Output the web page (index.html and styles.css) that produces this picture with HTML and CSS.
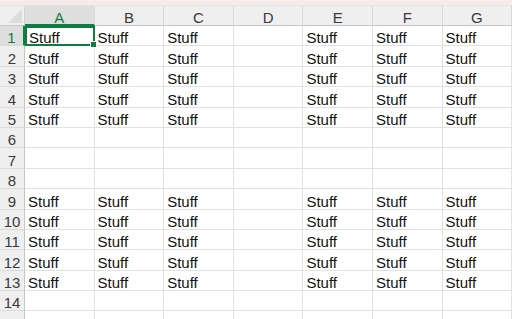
FILE: index.html
```html
<!DOCTYPE html>
<html lang="en">
<head>
    <meta charset="UTF-8">
    <title>Sheet1</title>
    <link rel="stylesheet" href="styles.css">
</head>
<body>
    <div class="ribbon-edge"></div>
    <div class="sheet">
        <div class="corner"><div class="corner-tri"></div></div>
        <div class="col-head active">A</div>
        <div class="col-head">B</div>
        <div class="col-head">C</div>
        <div class="col-head">D</div>
        <div class="col-head">E</div>
        <div class="col-head">F</div>
        <div class="col-head">G</div>

        <div class="row-head active">1</div>
        <div class="cell selected">Stuff<span class="handle"></span></div><div class="cell">Stuff</div><div class="cell">Stuff</div><div class="cell"></div><div class="cell">Stuff</div><div class="cell">Stuff</div><div class="cell">Stuff</div>
        <div class="row-head">2</div>
        <div class="cell">Stuff</div><div class="cell">Stuff</div><div class="cell">Stuff</div><div class="cell"></div><div class="cell">Stuff</div><div class="cell">Stuff</div><div class="cell">Stuff</div>
        <div class="row-head">3</div>
        <div class="cell">Stuff</div><div class="cell">Stuff</div><div class="cell">Stuff</div><div class="cell"></div><div class="cell">Stuff</div><div class="cell">Stuff</div><div class="cell">Stuff</div>
        <div class="row-head">4</div>
        <div class="cell">Stuff</div><div class="cell">Stuff</div><div class="cell">Stuff</div><div class="cell"></div><div class="cell">Stuff</div><div class="cell">Stuff</div><div class="cell">Stuff</div>
        <div class="row-head">5</div>
        <div class="cell">Stuff</div><div class="cell">Stuff</div><div class="cell">Stuff</div><div class="cell"></div><div class="cell">Stuff</div><div class="cell">Stuff</div><div class="cell">Stuff</div>
        <div class="row-head">6</div>
        <div class="cell"></div><div class="cell"></div><div class="cell"></div><div class="cell"></div><div class="cell"></div><div class="cell"></div><div class="cell"></div>
        <div class="row-head">7</div>
        <div class="cell"></div><div class="cell"></div><div class="cell"></div><div class="cell"></div><div class="cell"></div><div class="cell"></div><div class="cell"></div>
        <div class="row-head">8</div>
        <div class="cell"></div><div class="cell"></div><div class="cell"></div><div class="cell"></div><div class="cell"></div><div class="cell"></div><div class="cell"></div>
        <div class="row-head">9</div>
        <div class="cell">Stuff</div><div class="cell">Stuff</div><div class="cell">Stuff</div><div class="cell"></div><div class="cell">Stuff</div><div class="cell">Stuff</div><div class="cell">Stuff</div>
        <div class="row-head">10</div>
        <div class="cell">Stuff</div><div class="cell">Stuff</div><div class="cell">Stuff</div><div class="cell"></div><div class="cell">Stuff</div><div class="cell">Stuff</div><div class="cell">Stuff</div>
        <div class="row-head">11</div>
        <div class="cell">Stuff</div><div class="cell">Stuff</div><div class="cell">Stuff</div><div class="cell"></div><div class="cell">Stuff</div><div class="cell">Stuff</div><div class="cell">Stuff</div>
        <div class="row-head">12</div>
        <div class="cell">Stuff</div><div class="cell">Stuff</div><div class="cell">Stuff</div><div class="cell"></div><div class="cell">Stuff</div><div class="cell">Stuff</div><div class="cell">Stuff</div>
        <div class="row-head">13</div>
        <div class="cell">Stuff</div><div class="cell">Stuff</div><div class="cell">Stuff</div><div class="cell"></div><div class="cell">Stuff</div><div class="cell">Stuff</div><div class="cell">Stuff</div>
        <div class="row-head">14</div>
        <div class="cell"></div><div class="cell"></div><div class="cell"></div><div class="cell"></div><div class="cell"></div><div class="cell"></div><div class="cell"></div>
        <div class="row-head"></div>
        <div class="cell"></div><div class="cell"></div><div class="cell"></div><div class="cell"></div><div class="cell"></div><div class="cell"></div><div class="cell"></div>
    </div>
</body>
</html>
```

FILE: styles.css
```css
body {
    margin: 0;
    background-color: #ffffff;
    font-family: "Liberation Sans", Arial, sans-serif;
    overflow: hidden;
    height: 319px;
}

.ribbon-edge {
    height: 5px;
    background-color: #f3ecea;
    border-bottom: 1px solid #e4e4e4;
}

.sheet {
    display: grid;
    grid-template-columns: 25px repeat(7, 69.6px);
    grid-template-rows: 20px repeat(15, 20.4px);
}

.corner {
    background-color: #efefef;
    border-right: 1px solid #d4d4d4;
    border-bottom: 1px solid #c6c6c6;
    box-sizing: border-box;
    position: relative;
}

.corner-tri {
    position: absolute;
    right: 2px;
    bottom: 2px;
    width: 0;
    height: 0;
    border-left: 14px solid transparent;
    border-bottom: 14px solid #dcdcdc;
}

.col-head {
    background-color: #efefef;
    color: #3a3a3a;
    font-size: 15px;
    display: flex;
    align-items: center;
    justify-content: center;
    padding-top: 4px;
    border-right: 1px solid #d8d8d8;
    border-bottom: 1px solid #c6c6c6;
    box-sizing: border-box;
}

.col-head.active {
    background-color: #dedede;
    color: #107c41;
    border-bottom: 2px solid #107c41;
}

.row-head {
    background-color: #efefef;
    color: #3a3a3a;
    font-size: 15px;
    line-height: 13px;
    display: flex;
    align-items: flex-end;
    justify-content: center;
    padding-bottom: 1px;
    border-right: 1px solid #c6c6c6;
    border-bottom: 1px solid #dadada;
    box-sizing: border-box;
}

.row-head.active {
    background-color: #dedede;
    color: #107c41;
    border-right: 2px solid #107c41;
}

.cell {
    font-size: 15px;
    line-height: 13px;
    color: #111111;
    display: flex;
    align-items: flex-end;
    padding-left: 3px;
    padding-bottom: 1px;
    border-right: 1px solid #e1e1e1;
    border-bottom: 1px solid #e1e1e1;
    box-sizing: border-box;
}

.cell.selected {
    position: relative;
    border: 2px solid #107c41;
    padding-left: 2px;
    padding-bottom: 0;
}

.handle {
    position: absolute;
    right: -4px;
    bottom: -4px;
    width: 5px;
    height: 5px;
    background-color: #107c41;
    border: 1px solid #ffffff;
}
```
